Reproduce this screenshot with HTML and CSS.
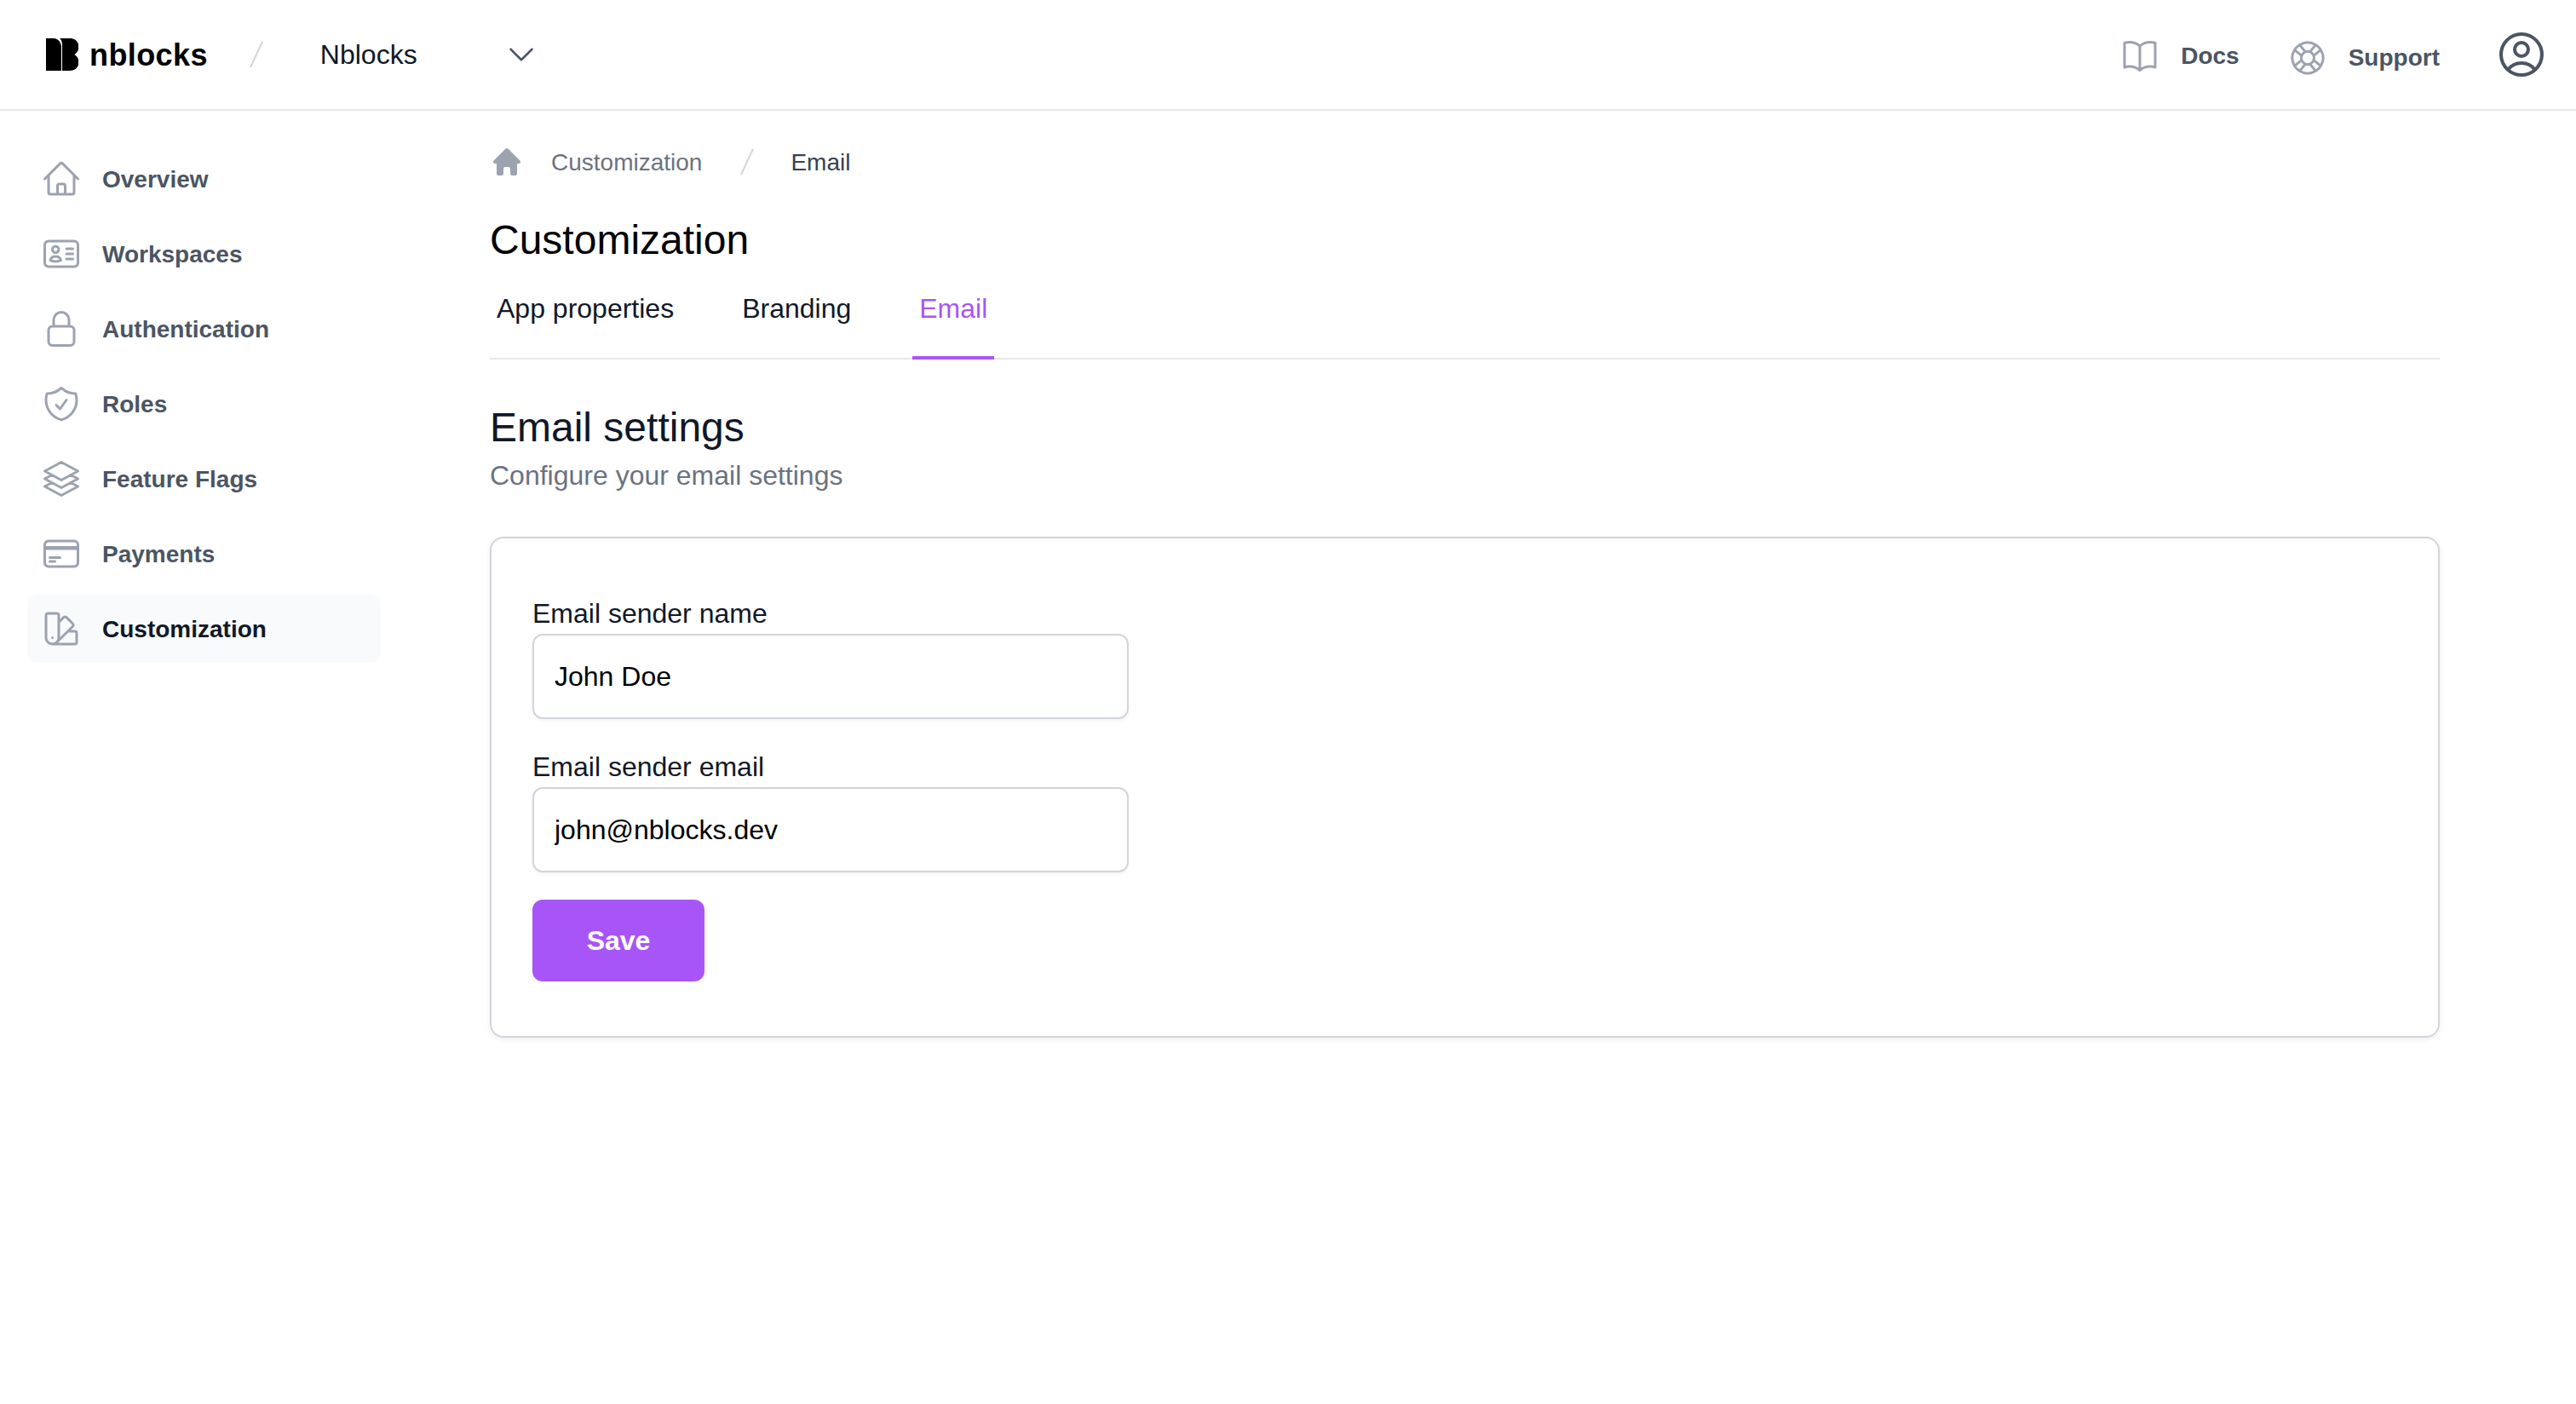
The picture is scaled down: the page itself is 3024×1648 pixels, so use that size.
FILE: index.html
```html
<!DOCTYPE html>
<html lang="en">
<head>
    <meta charset="UTF-8">
    <title>Customization - Email</title>
    <link rel="stylesheet" href="styles.css">
</head>
<body>
    <header class="topbar">
        <div class="topbar-left">
            <a class="logo" href="#">
                <svg class="logo-mark" viewBox="0 0 38 38" fill="currentColor">
                    <path d="M0 0H9C14.500 0 18 5 18 11V38H0Z"/>
                    <path d="M19 38V8C19 3.500 17.500 1 16 0H28C34 0 38.500 4 38.500 10C38.500 14 36.500 17 33.500 19C36.500 21 38.500 24 38.500 28C38.500 34 34 38 28 38Z"/>
                </svg>
                <span>nblocks</span>
            </a>
            <svg class="slash slash-top" viewBox="0 0 16 32"><path d="M15 1 1 31"/></svg>
            <button class="switcher">
                <span>Nblocks</span>
                <svg class="icon-chevron" viewBox="0 0 24 24"><path d="m19.500 8.250-7.500 7.500-7.500-7.500"/></svg>
            </button>
        </div>
        <div class="topbar-right">
            <a class="top-link" href="#">
                <svg class="icon" viewBox="0 0 24 24"><path d="M12 6.042A8.967 8.967 0 0 0 6 3.750c-1.052 0-2.062.18-3 .512v14.250A8.987 8.987 0 0 1 6 18c2.305 0 4.408.867 6 2.292m0-14.250a8.966 8.966 0 0 1 6-2.292c1.052 0 2.062.18 3 .512v14.250A8.987 8.987 0 0 0 18 18a8.967 8.967 0 0 0-6 2.292m0-14.250v14.250"/></svg>
                <span>Docs</span>
            </a>
            <a class="top-link support" href="#">
                <svg class="icon" viewBox="0 0 24 24"><path d="M16.712 4.330a9.027 9.027 0 0 1 1.652 1.306c.51.51.944 1.064 1.306 1.652M16.712 4.330l-3.448 4.138m3.448-4.138a9.014 9.014 0 0 0-9.424 0M19.670 7.288l-4.138 3.448m4.138-3.448a9.014 9.014 0 0 1 0 9.424m-4.138-5.976a3.736 3.736 0 0 0-.88-1.388 3.737 3.737 0 0 0-1.388-.88m2.268 2.268a3.765 3.765 0 0 1 0 2.528m-2.268-4.796a3.765 3.765 0 0 0-2.528 0m4.796 4.796c-.181.506-.475.982-.88 1.388a3.736 3.736 0 0 1-1.388.88m2.268-2.268 4.138 3.448m0 0a9.027 9.027 0 0 1-1.306 1.652c-.51.51-1.064.944-1.652 1.306m0 0-3.448-4.138m3.448 4.138a9.014 9.014 0 0 1-9.424 0m5.976-4.138a3.765 3.765 0 0 1-2.528 0m0 0a3.736 3.736 0 0 1-1.388-.88 3.737 3.737 0 0 1-.88-1.388m2.268 2.268L7.288 19.670m0 0a9.024 9.024 0 0 1-1.652-1.306 9.027 9.027 0 0 1-1.306-1.652m0 0 4.138-3.448M4.330 16.712a9.014 9.014 0 0 1 0-9.424m4.138 5.976a3.765 3.765 0 0 1 0-2.528m0 0c.181-.506.475-.982.88-1.388a3.736 3.736 0 0 1 1.388-.88m-2.268 2.268L4.330 7.288m6.406 1.180L7.288 4.330m0 0a9.024 9.024 0 0 0-1.652 1.306A9.025 9.025 0 0 0 4.330 7.288"/></svg>
                <span>Support</span>
            </a>
            <svg class="icon-user" viewBox="0 0 24 24"><path d="M17.982 18.725A7.488 7.488 0 0 0 12 15.750a7.488 7.488 0 0 0-5.982 2.975m11.963 0a9 9 0 1 0-11.963 0m11.963 0A8.966 8.966 0 0 1 12 21a8.966 8.966 0 0 1-5.982-2.275M15 9.750a3 3 0 1 1-6 0 3 3 0 0 1 6 0Z"/></svg>
        </div>
    </header>

    <div class="layout">
        <nav class="sidebar">
            <a class="nav-item" href="#">
                <svg class="icon" viewBox="0 0 24 24"><path d="m2.250 12 8.954-8.955c.44-.439 1.152-.439 1.591 0L21.750 12M4.500 9.750v10.125c0 .621.504 1.125 1.125 1.125H9.750v-4.875c0-.621.504-1.125 1.125-1.125h2.250c.621 0 1.125.504 1.125 1.125V21h4.125c.621 0 1.125-.504 1.125-1.125V9.750M8.250 21h8.250"/></svg>
                <span>Overview</span>
            </a>
            <a class="nav-item" href="#">
                <svg class="icon" viewBox="0 0 24 24"><path d="M15 9h3.750M15 12h3.750M15 15h3.750M4.500 19.500h15a2.250 2.250 0 0 0 2.250-2.250V6.750A2.250 2.250 0 0 0 19.500 4.500h-15a2.250 2.250 0 0 0-2.250 2.250v10.500A2.250 2.250 0 0 0 4.500 19.500Zm6-10.125a1.875 1.875 0 1 1-3.750 0 1.875 1.875 0 0 1 3.750 0Zm1.294 6.336a6.721 6.721 0 0 1-3.170.789 6.721 6.721 0 0 1-3.168-.789 3.376 3.376 0 0 1 6.338 0Z"/></svg>
                <span>Workspaces</span>
            </a>
            <a class="nav-item" href="#">
                <svg class="icon" viewBox="0 0 24 24"><path d="M16.500 10.500V6.750a4.500 4.500 0 1 0-9 0v3.750m-.75 11.250h10.500a2.250 2.250 0 0 0 2.250-2.250v-6.750a2.250 2.250 0 0 0-2.250-2.250H6.750a2.250 2.250 0 0 0-2.250 2.250v6.750a2.250 2.250 0 0 0 2.250 2.250Z"/></svg>
                <span>Authentication</span>
            </a>
            <a class="nav-item" href="#">
                <svg class="icon" viewBox="0 0 24 24"><path d="M9 12.750 11.250 15 15 9.750m-3-7.036A11.959 11.959 0 0 1 3.598 6 11.990 11.990 0 0 0 3 9.749c0 5.592 3.824 10.290 9 11.623 5.176-1.332 9-6.030 9-11.622 0-1.310-.21-2.571-.598-3.751h-.152c-3.196 0-6.100-1.248-8.250-3.285Z"/></svg>
                <span>Roles</span>
            </a>
            <a class="nav-item" href="#">
                <svg class="icon" viewBox="0 0 24 24"><path d="M6.429 9.750 2.250 12l4.179 2.250m0-4.500 5.571 3 5.571-3m-11.142 0L2.250 7.500 12 2.250l9.750 5.250-4.179 2.250m0 0L21.750 12l-4.179 2.250m0 0 4.179 2.250L12 21.750 2.250 16.500l4.179-2.250m11.142 0-5.571 3-5.571-3"/></svg>
                <span>Feature Flags</span>
            </a>
            <a class="nav-item" href="#">
                <svg class="icon" viewBox="0 0 24 24"><path d="M2.250 8.250h19.500M2.250 9h19.500m-16.500 5.250h6m-6 2.250h3m-3.750 3h15a2.250 2.250 0 0 0 2.250-2.250V6.750A2.250 2.250 0 0 0 19.500 4.500h-15a2.250 2.250 0 0 0-2.250 2.250v10.500A2.250 2.250 0 0 0 4.500 19.500Z"/></svg>
                <span>Payments</span>
            </a>
            <a class="nav-item active" href="#">
                <svg class="icon" viewBox="0 0 24 24"><path d="M4.098 19.902a3.750 3.750 0 0 0 5.304 0l6.401-6.402M6.750 21A3.750 3.750 0 0 1 3 17.250V4.125C3 3.504 3.504 3 4.125 3h5.250c.621 0 1.125.504 1.125 1.125v4.072M6.750 21a3.750 3.750 0 0 0 3.750-3.750V8.197M6.750 21h13.125c.621 0 1.125-.504 1.125-1.125v-5.250c0-.621-.504-1.125-1.125-1.125h-4.072M10.500 8.197l2.880-2.880c.438-.439 1.150-.439 1.590 0l3.712 3.713c.44.44.44 1.152 0 1.590l-2.879 2.880M6.750 17.250h.008v.008H6.750v-.008Z"/></svg>
                <span>Customization</span>
            </a>
        </nav>

        <main class="content">
            <div class="breadcrumb">
                <svg class="icon-crumb" viewBox="0 0 20 20"><path d="M9.293 2.293a1 1 0 0 1 1.414 0l7 7A1 1 0 0 1 17 11h-1v6a1 1 0 0 1-1 1h-2a1 1 0 0 1-1-1v-3a1 1 0 0 0-1-1H9a1 1 0 0 0-1 1v3a1 1 0 0 1-1 1H5a1 1 0 0 1-1-1v-6H3a1 1 0 0 1-.707-1.707l7-7Z"/></svg>
                <a class="crumb" href="#">Customization</a>
                <svg class="slash" viewBox="0 0 16 32"><path d="M15 1 1 31"/></svg>
                <span class="crumb-current">Email</span>
            </div>

            <h1>Customization</h1>

            <div class="tabs">
                <a class="tab" href="#">App properties</a>
                <a class="tab" href="#">Branding</a>
                <a class="tab active" href="#">Email</a>
            </div>

            <h2>Email settings</h2>
            <p class="subtitle">Configure your email settings</p>

            <form class="card">
                <div class="field">
                    <label for="sender-name">Email sender name</label>
                    <input id="sender-name" type="text" value="John Doe">
                </div>
                <div class="field">
                    <label for="sender-email">Email sender email</label>
                    <input id="sender-email" type="text" value="john@nblocks.dev">
                </div>
                <button class="save-btn" type="button">Save</button>
            </form>
        </main>
    </div>
</body>
</html>
```

FILE: styles.css
```css
* {
    margin: 0;
    padding: 0;
    box-sizing: border-box;
    font-family: 'Liberation Sans', Arial, sans-serif;
}

body {
    min-height: 100vh;
    background: #fff;
    color: #111827;
}

a {
    color: inherit;
    text-decoration: none;
}

svg {
    display: block;
    flex-shrink: 0;
}

.icon {
    width: 48px;
    height: 48px;
    fill: none;
    stroke: #9ca3af;
    stroke-width: 1.5;
    stroke-linecap: round;
    stroke-linejoin: round;
}

.slash {
    width: 16px;
    height: 32px;
    fill: none;
    stroke: #d1d5db;
    stroke-width: 2;
}

/* top bar */
.topbar {
    height: 130px;
    display: flex;
    justify-content: space-between;
    align-items: center;
    padding: 0 32px 0 54px;
    border-bottom: 2px solid #e5e7eb;
}

.topbar-left,
.topbar-right {
    display: flex;
    align-items: center;
}

.logo {
    display: flex;
    align-items: center;
    gap: 13px;
    color: #000;
    font-size: 36px;
    font-weight: 700;
    letter-spacing: 0.4px;
}

.logo span {
    padding-top: 2px;
}

.logo-mark {
    width: 38px;
    height: 38px;
}

.slash-top {
    margin: 0 67px 0 49px;
}

.switcher {
    display: flex;
    align-items: center;
    gap: 102px;
    background: none;
    border: none;
    color: #111827;
    font-size: 32px;
    cursor: pointer;
}

.icon-chevron {
    width: 40px;
    height: 40px;
    fill: none;
    stroke: #4b5563;
    stroke-width: 1.5;
    stroke-linecap: round;
    stroke-linejoin: round;
}

.top-link {
    display: flex;
    align-items: center;
    gap: 24px;
    margin-top: 3px;
    color: #4b5563;
    font-size: 28px;
    font-weight: 700;
}

.support {
    margin: 8px 0 0 56px;
}

.icon-user {
    width: 64px;
    height: 64px;
    margin-left: 64px;
    fill: none;
    stroke: #4b5563;
    stroke-width: 1.5;
    stroke-linecap: round;
    stroke-linejoin: round;
}

/* page */
.layout {
    display: flex;
}

.sidebar {
    width: 415px;
    margin-left: 32px;
    padding-top: 40px;
    flex-shrink: 0;
    display: flex;
    flex-direction: column;
    gap: 8px;
}

.nav-item {
    height: 80px;
    display: flex;
    align-items: center;
    gap: 24px;
    padding-left: 16px;
    border-radius: 12px;
    color: #4b5563;
    font-size: 28px;
    font-weight: 700;
}

.nav-item span {
    padding-top: 2px;
}

.nav-item.active {
    background: #f9fafb;
    color: #111827;
}

.content {
    flex: 1;
    margin: 0 160px 0 128px;
    padding-top: 36px;
}

.breadcrumb {
    height: 48px;
    display: flex;
    align-items: center;
    font-size: 28px;
}

.icon-crumb {
    width: 40px;
    height: 40px;
    margin-right: 32px;
    fill: #9ca3af;
}

.crumb {
    padding-top: 2px;
    color: #6b7280;
}

.breadcrumb .slash {
    margin: 0 43px 0 45px;
}

.crumb-current {
    padding-top: 2px;
    color: #374151;
}

h1 {
    margin-top: 36px;
    font-size: 48px;
    line-height: 64px;
    font-weight: 400;
    color: #000;
}

.tabs {
    display: flex;
    gap: 64px;
    padding-top: 24px;
    border-bottom: 2px solid #e5e7eb;
}

.tab {
    padding: 0 8px 32px;
    margin-bottom: -2px;
    border-bottom: 4px solid transparent;
    font-size: 32px;
    line-height: 48px;
    color: #111827;
}

.tab.active {
    color: #a855f7;
    border-bottom-color: #a855f7;
}

h2 {
    margin-top: 48px;
    font-size: 48px;
    line-height: 64px;
    font-weight: 400;
    color: #111827;
}

.subtitle {
    font-size: 32px;
    line-height: 48px;
    color: #6b7280;
}

.card {
    margin-top: 48px;
    padding: 64px 48px;
    border: 2px solid #d1d5db;
    border-radius: 16px;
    box-shadow: 0 2px 6px rgba(0, 0, 0, 0.08);
}

.field {
    width: 700px;
    margin-bottom: 32px;
}

.field label {
    display: block;
    font-size: 32px;
    line-height: 48px;
    color: #111827;
}

.field input {
    display: block;
    width: 100%;
    height: 100px;
    padding: 0 24px;
    border: 2px solid #d1d5db;
    border-radius: 12px;
    box-shadow: 0 2px 4px rgba(0, 0, 0, 0.05);
    font-size: 32px;
    color: #000;
    outline: none;
}

.save-btn {
    display: block;
    width: 202px;
    height: 96px;
    background: #a855f7;
    border: none;
    border-radius: 12px;
    color: #fff;
    font-size: 32px;
    font-weight: 700;
    cursor: pointer;
}
```
